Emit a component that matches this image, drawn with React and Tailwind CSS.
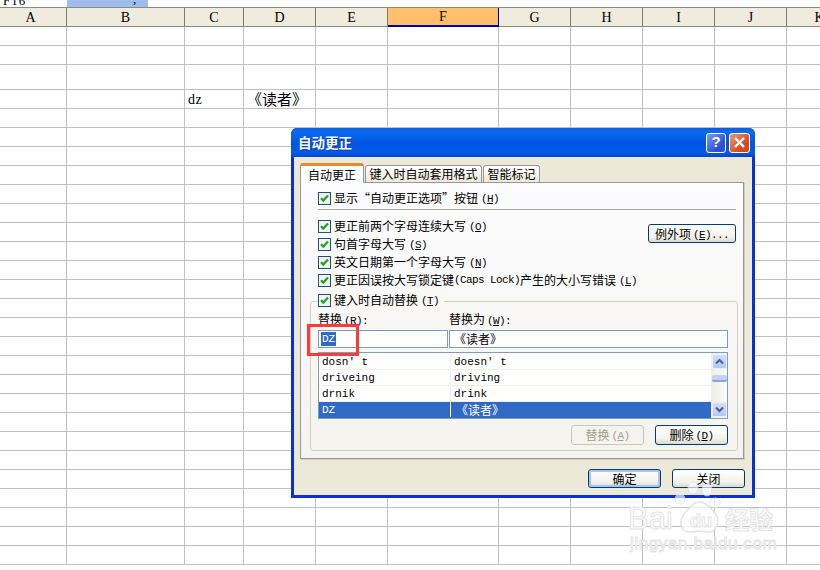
import React from 'react';

const MONO = "font-['Liberation_Mono','Noto_Sans_CJK_SC',monospace]";
const SERIF = "font-['Liberation_Serif','Noto_Sans_CJK_SC',serif]";
const CJK = "font-['Noto_Sans_CJK_SC','Liberation_Sans',sans-serif]";

const columns = ['A', 'B', 'C', 'D', 'E', 'F', 'G', 'H', 'I', 'J', 'K'];
const rowHeights = [
  'h-[19px]', 'h-[19px]', 'h-[25px]', 'h-[19px]', 'h-[19px]', 'h-[19px]', 'h-[19px]', 'h-[19px]',
  'h-[19px]', 'h-[19px]', 'h-[19px]', 'h-[19px]', 'h-[19px]', 'h-[19px]', 'h-[19px]', 'h-[19px]',
  'h-[19px]', 'h-[19px]', 'h-[19px]', 'h-[19px]', 'h-[19px]', 'h-[19px]', 'h-[19px]', 'h-[19px]',
  'h-[19px]', 'h-[19px]', 'h-[19px]', 'h-[19px]',
];
const gridCols = 'grid grid-cols-[67px_118px_59px_72px_72px_111px_72px_72px_72px_72px_66px] w-[853px]';

const listRows = [
  { from: "dosn' t", to: "doesn' t" },
  { from: 'driveing', to: 'driving' },
  { from: 'drnik', to: 'drink' },
  { from: 'DZ', to: '《读者》', selected: true },
];

// latin text in the dialog is half the width of a chinese glyph
const Latin = ({ children, className = '' }) => (
  <span className={`${MONO} text-[11px] tracking-[-0.6px] ${className}`}>{children}</span>
);

const Key = ({ letter }) => (
  <Latin>
    (<span className="underline">{letter}</span>)
  </Latin>
);

const CheckRow = ({ label, keyName, extra }) => (
  <div className="flex items-center h-[18px] whitespace-nowrap">
    <svg width="13" height="13" viewBox="0 0 13 13" className="mr-[3px] shrink-0">
      <rect x="0.5" y="0.5" width="12" height="12" fill="#f4f4ee" stroke="#1c5180" />
      <path d="M3 6.2 L5.3 8.6 L10 3.6" fill="none" stroke="#21a121" strokeWidth="2.2" />
    </svg>
    <span>{label}</span>
    {extra}
    <span className="ml-[3px]"><Key letter={keyName} /></span>
  </div>
);

const XpButton = ({ children, className = '', disabled }) => (
  <button
    className={`flex items-center justify-center text-[12px] rounded-[3px] border ${
      disabled
        ? 'border-[#c9c7ba] bg-[#f4f3ee] text-[#a19e8c]'
        : 'border-[#003c74] bg-[linear-gradient(#ffffff,#f3f3ec_70%,#dcd8cc)] text-black'
    } ${className}`}
  >
    {children}
  </button>
);

const ScrollArrow = ({ up }) => (
  <div className="w-[15px] h-[15px] rounded-[2px] border border-[#e8efff] bg-[linear-gradient(#d3dffc,#b4c6f5)] flex items-center justify-center">
    <svg width="9" height="7" viewBox="0 0 9 7">
      <path d={up ? 'M1 5.5 L4.5 2 L8 5.5' : 'M1 1.5 L4.5 5 L8 1.5'} fill="none" stroke="#4d6185" strokeWidth="2" />
    </svg>
  </div>
);

const Sheet = () => (
  <div className={`${SERIF} text-[14px] text-black`}>
    <div className="flex h-[7px] overflow-hidden">
      <div className="w-[67px] pl-[3px] leading-[7px] -mt-[3px] text-[13px] tracking-[1px]">F16</div>
      <div className="w-[81px] h-[7px] bg-[#a0bdf0] pl-[66px] leading-[7px] text-[13px]">
        <span className="block -mt-[5px]">,</span>
      </div>
    </div>
    <div className={`${gridCols} h-[20px] border-y border-[#8b8b78] bg-[#efebde]`}>
      {columns.map((c) => (
        <div
          key={c}
          className={`flex items-center justify-center border-r h-[18px] ${
            c === 'F'
              ? 'bg-[#ffc06e] border-[#00009c] border-b shadow-[0_1px_0_#00009c]'
              : 'border-[#7d7d65]'
          } ${c === 'A' ? 'pr-[5px]' : ''}`}
        >
          {c}
        </div>
      ))}
    </div>
    {rowHeights.map((h, i) => (
      <div key={i} className={`${gridCols} ${h}`}>
        {columns.map((c) => (
          <div key={c} className="border-r border-b border-[#c0c0c0] flex items-center overflow-hidden whitespace-nowrap">
            {i === 3 && c === 'C' && <span className="pl-[3px] tracking-[0.6px]">dz</span>}
            {i === 3 && c === 'D' && <span className={`${CJK} text-[15px] pl-[3px]`}>《读者》</span>}
          </div>
        ))}
      </div>
    ))}
  </div>
);

const Dialog = () => (
  <div className={`${CJK} absolute left-[291px] top-[128px] w-[464px] h-[370px] rounded-t-[6px] overflow-hidden flex flex-col bg-[#0831d9] text-[12px] text-black`}>
    <div className="h-[29px] shrink-0 flex items-center justify-between pl-[7px] pr-[5px] bg-[linear-gradient(#0a5be0,#0a6af0_12%,#0256e2_50%,#0559e8_85%,#0346c8)]">
      <span className="text-white font-bold text-[13.5px] [text-shadow:1px_1px_0_#0b3fa8]">自动更正</span>
      <div className="flex gap-[3px]">
        <div className="w-[20px] h-[20px] rounded-[3px] border border-white bg-[linear-gradient(135deg,#7f9df2,#2a50d8_70%)] flex items-center justify-center text-white font-bold text-[15px] font-['Liberation_Sans',sans-serif]">
          ?
        </div>
        <div className="w-[21px] h-[20px] rounded-[3px] border border-white bg-[linear-gradient(135deg,#ee9a78,#d04a20_70%)] flex items-center justify-center">
          <svg width="13" height="13" viewBox="0 0 13 13">
            <path d="M2 2 L11 11 M11 2 L2 11" stroke="#ffffff" strokeWidth="2.4" />
          </svg>
        </div>
      </div>
    </div>

    <div className="flex-1 mx-[3px] mb-[3px] bg-[#ece9d8] pt-[6px] pl-[6px] pr-[8px] border-b-0">
      {/* tabs */}
      <div className="flex h-[20px] items-end relative z-10">
        <div className="w-[64px] h-[20px] rounded-t-[3px] border-t-[3px] border-x border-[#e68b2c] border-x-[#919b9c] bg-white flex items-center justify-center">
          自动更正
        </div>
        <div className="w-[117px] h-[17px] ml-[1px] mb-[1px] rounded-t-[3px] border-t border-x border-[#919b9c] bg-[linear-gradient(#ffffff,#ece9d8)] flex items-center justify-center whitespace-nowrap">
          键入时自动套用格式
        </div>
        <div className="w-[57px] h-[17px] ml-[1px] mb-[1px] rounded-t-[3px] border-t border-x border-[#919b9c] bg-[linear-gradient(#ffffff,#ece9d8)] flex items-center justify-center">
          智能标记
        </div>
      </div>

      {/* page */}
      <div className="h-[277px] w-[444px] -mt-[1px] border border-[#919b9c] bg-[linear-gradient(#fcfcfe,#f4f3ee)] shadow-[1px_1px_0_#d0cdbd] pt-[6px] pl-[17px] pr-[7px]">
        <CheckRow label={'显示“自动更正选项”按钮'} keyName="H" />
        <div className="h-[1px] bg-[#aca899] mt-[2px] mb-[7px]" />
        <div className="flex justify-between">
          <div>
            <CheckRow label="更正前两个字母连续大写" keyName="O" />
            <CheckRow label="句首字母大写" keyName="S" />
            <CheckRow label="英文日期第一个字母大写" keyName="N" />
            <CheckRow
              label="更正因误按大写锁定键"
              keyName="L"
              extra={
                <>
                  <Latin>(Caps Lock)</Latin>
                  <span>产生的大小写错误</span>
                </>
              }
            />
          </div>
          <XpButton className="w-[88px] h-[19px] mt-[7px]">
            例外项<span className="ml-[2px]"><Latin>(<span className="underline">E</span>)...</Latin></span>
          </XpButton>
        </div>

        {/* auto replace group */}
        <div className="-ml-[8px] w-[428px] h-[150px] mt-[12px] rounded-[3px] border border-[#d0d0bf] pl-[7px] pr-[8px]">
          <div className="-mt-[11px] w-fit pr-[5px] bg-[#f8f8f5]">
            <CheckRow label="键入时自动替换" keyName="T" />
          </div>
          <div className="flex mt-[3px] h-[15px] items-center">
            <div className="w-[131px]">替换<span className="ml-[2px]"><Key letter="R" /><Latin>:</Latin></span></div>
            <div>替换为<span className="ml-[2px]"><Key letter="W" /><Latin>:</Latin></span></div>
          </div>
          <div className="flex gap-[1px] mt-[3px] h-[18px]">
            <div className="w-[130px] border border-[#7f9db9] bg-white flex items-center pl-[2px]">
              <span className={`${MONO} text-[11px] bg-[#316ac5] text-white px-[1px] leading-[14px]`}>DZ</span>
            </div>
            <div className="w-[279px] border border-[#7f9db9] bg-white flex items-center pl-[4px] text-[12px]">
              《读者》
            </div>
          </div>
          <div className="flex mt-[4px] w-[410px] h-[67px] border border-[#7f9db9] bg-white">
            <div className="w-[392px] pt-[1px]">
              {listRows.map((r) => (
                <div
                  key={r.from}
                  className={`flex h-[16px] border-b ${
                    r.selected ? 'bg-[#316ac5] text-white border-[#316ac5]' : 'border-[#f1efe2]'
                  }`}
                >
                  <div className={`w-[132px] pl-[3px] ${MONO} text-[11px] leading-[16px] border-r ${r.selected ? 'border-white' : 'border-[#f1efe2]'}`}>
                    {r.from}
                  </div>
                  <div className={`pl-[3px] ${r.selected ? 'text-[12px] pl-[5px]' : `${MONO} text-[11px]`} leading-[16px] whitespace-pre`}>
                    {r.to}
                  </div>
                </div>
              ))}
            </div>
            <div className="flex-1 flex flex-col items-center py-[1px] bg-[linear-gradient(90deg,#eeede5,#fbfbf8)]">
              <ScrollArrow up />
              <div className="w-[15px] h-[7px] mt-[6px] rounded-[2px] border-b-2 border-[#8ba4dc] bg-[#c4d2f7]" />
              <div className="flex-1" />
              <ScrollArrow />
            </div>
          </div>
          <div className="flex justify-end gap-[11px] mt-[6px] pr-[1px]">
            <XpButton disabled className="w-[73px] h-[20px]">
              替换<span className="ml-[2px]"><Latin>(<span className="underline">A</span>)</Latin></span>
            </XpButton>
            <XpButton className="w-[73px] h-[20px]">
              删除<span className="ml-[2px]"><Key letter="D" /></span>
            </XpButton>
          </div>
        </div>
      </div>

      <div className="flex justify-end gap-[11px] mt-[10px] -mr-[1px]">
        <XpButton className="w-[73px] h-[19px] shadow-[inset_0_0_0_2px_#a9c4ee]">确定</XpButton>
        <XpButton className="w-[73px] h-[19px]">关闭</XpButton>
      </div>
    </div>
  </div>
);

const Watermark = () => (
  <div className="absolute left-[628px] top-[478px] w-[150px] h-[78px] text-white pointer-events-none">
    <svg width="60" height="60" viewBox="0 0 60 60" className="absolute left-[45px] top-[3px]">
      <g fill="#ffffff" fillOpacity="0.65" stroke="#d8dcea" strokeOpacity="0.7">
        <ellipse cx="20" cy="7" rx="5" ry="6" />
        <ellipse cx="34" cy="9" rx="5" ry="6" />
        <ellipse cx="7" cy="18" rx="5" ry="5" />
        <ellipse cx="42" cy="22" rx="5" ry="5" />
      </g>
      <path
        d="M27 21 C34 21 38 28 42 32 C47 38 45 52 34 51 C28 50 24 50 18 51 C8 52 5 41 11 33 C16 28 19 21 27 21 Z"
        fill="#ffffff"
        fillOpacity="0.8"
        stroke="#e2e2e2"
        strokeWidth="1.5"
      />
    </svg>
    <div className="absolute left-0 top-[22px] flex items-center whitespace-nowrap [-webkit-text-stroke:1px_#e4e4e4] font-['Liberation_Sans',sans-serif] text-[31px] leading-[32px]">
      <span className="w-[62px]">Bai</span>
      <span className="text-[18px] font-bold w-[35px] pt-[5px]">du</span>
      <span className={`${CJK} text-[24px] font-bold`}>经验</span>
    </div>
    <div className="absolute left-[2px] top-[56px] whitespace-nowrap [-webkit-text-stroke:1px_#e4e4e4] font-['Liberation_Sans',sans-serif] text-[17px] leading-[20px] tracking-[0.6px]">
      jingyan.baidu.com
    </div>
  </div>
);

const App = () => (
  <div className="relative w-[820px] h-[570px] overflow-hidden bg-white">
    <Sheet />
    <Dialog />
    {/* red mark over the replace field */}
    <div className="absolute left-[307px] top-[324px] w-[52px] h-[32px] border-[3px] border-[#f83c3c]" />
    <Watermark />
  </div>
);

export default App;
